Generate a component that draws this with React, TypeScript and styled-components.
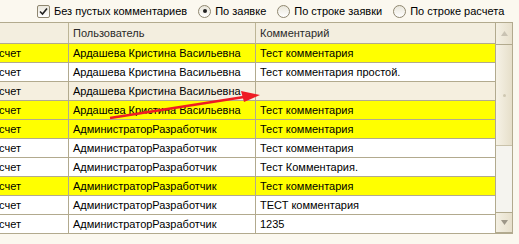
import styled, { createGlobalStyle } from 'styled-components';
import { Fragment } from 'react';

const GlobalStyle = createGlobalStyle`
  html, body {
    margin: 0;
    padding: 0;
    background: #fbf8ef;
  }
  body {
    font-family: "Liberation Sans", Arial, sans-serif;
    font-size: 11px;
    color: #000;
  }
`;

type RowKind = 'yellow' | 'white' | 'current';

const rowColors: Record<RowKind, string> = {
  yellow: '#ffff00',
  white: '#ffffff',
  current: '#f5efdf',
};

const rows: { kind: RowKind; type: string; user: string; comment: string }[] = [
  { kind: 'yellow', type: 'Расчет', user: 'Ардашева Кристина Васильевна', comment: 'Тест комментария' },
  { kind: 'white', type: 'Расчет', user: 'Ардашева Кристина Васильевна', comment: 'Тест комментария простой.' },
  { kind: 'current', type: 'Расчет', user: 'Ардашева Кристина Васильевна', comment: '' },
  { kind: 'yellow', type: 'Расчет', user: 'Ардашева Кристина Васильевна', comment: 'Тест комментария' },
  { kind: 'yellow', type: 'Расчет', user: 'АдминистраторРазработчик', comment: 'Тест комментария' },
  { kind: 'white', type: 'Расчет', user: 'АдминистраторРазработчик', comment: 'Тест комментария' },
  { kind: 'white', type: 'Расчет', user: 'АдминистраторРазработчик', comment: 'Тест Комментария.' },
  { kind: 'yellow', type: 'Расчет', user: 'АдминистраторРазработчик', comment: 'Тест комментария' },
  { kind: 'white', type: 'Расчет', user: 'АдминистраторРазработчик', comment: 'ТЕСТ комментария' },
  { kind: 'white', type: 'Расчет', user: 'АдминистраторРазработчик', comment: '1235' },
];

const Page = styled.div`
  position: relative;
  width: 519px;
  height: 244px;
  overflow: hidden;
  background: #fbf8ef;
`;

const Toolbar = styled.div`
  height: 22px;
  display: flex;
  align-items: center;
  padding-left: 37px;
  gap: 11px;
`;

const Option = styled.label`
  display: flex;
  align-items: center;
  gap: 4px;
  white-space: nowrap;
`;

const CheckBox = styled.span`
  width: 11px;
  height: 11px;
  border: 1px solid #8f8770;
  border-radius: 2px;
  background: linear-gradient(#ebe8dd, #fff);
  display: flex;
  align-items: center;
  justify-content: center;
`;

const Radio = styled.span<{ $on?: boolean }>`
  width: 11px;
  height: 11px;
  border: 1px solid #8f8770;
  border-radius: 50%;
  background: linear-gradient(#e9e6da, #fff);
  display: flex;
  align-items: center;
  justify-content: center;
  &::after {
    content: '';
    width: 4px;
    height: 4px;
    border-radius: 50%;
    background: ${(p) => (p.$on ? '#222' : 'transparent')};
  }
`;

const GridFrame = styled.div`
  display: flex;
  height: 212px;
  border-top: 1px solid #b2aa8e;
  border-bottom: 1px solid #b2aa8e;
  width: 513px;
  border-right: 1px solid #b2aa8e;
  box-sizing: border-box;
`;

const Table = styled.div`
  flex: 1;
  display: grid;
  grid-template-columns: 69px 187px 240px;
  grid-auto-rows: 19px;
  grid-template-rows: 21px;
  align-content: start;
  overflow: hidden;
`;

const HeadCell = styled.div`
  background: #f3eedf;
  border-right: 1px solid #bdb596;
  border-bottom: 1px solid #b2aa8e;
  display: flex;
  align-items: center;
  padding-left: 4px;
  color: #2a2a2a;
`;

const Cell = styled.div<{ $kind: RowKind; $first?: boolean }>`
  background: ${(p) => rowColors[p.$kind]};
  border-right: 1px solid #b2aa8e;
  border-bottom: 1px solid #b2aa8e;
  display: flex;
  align-items: center;
  padding-left: ${(p) => (p.$first ? 0 : 4)}px;
  overflow: hidden;
  white-space: nowrap;
`;

/* the first column is scrolled sideways, so its text starts out of view */
const Clipped = styled.span`
  margin-left: -14px;
`;

const ScrollBar = styled.div`
  width: 16px;
  display: flex;
  flex-direction: column;
  background: #f5f4ef;
  border-left: 1px solid #b2aa8e;
`;

const ScrollButton = styled.div<{ $h: number }>`
  height: ${(p) => p.$h}px;
  display: flex;
  align-items: center;
  justify-content: center;
  background: linear-gradient(90deg, #f4f0e3, #e7e0cc);
  border-bottom: 1px solid #b2aa8e;
`;

const Thumb = styled.div`
  height: 100px;
  background: linear-gradient(90deg, #f6f2e6, #e6dfca);
  border-bottom: 1px solid #c9c2aa;
  display: flex;
  align-items: center;
  justify-content: center;
  &::after {
    content: '';
    width: 3px;
    height: 3px;
    border-radius: 50%;
    background: #cfc8b2;
  }
`;

const Track = styled.div`
  flex: 1;
  border-bottom: 1px solid #b2aa8e;
`;

const Arrow = styled.svg`
  position: absolute;
  left: 0;
  top: 0;
  pointer-events: none;
`;

export default function App() {
  return (
    <Page>
      <GlobalStyle />
      <Toolbar>
        <Option>
          <CheckBox>
            <svg width="9" height="9" viewBox="0 0 9 9">
              <path d="M1 4.5 L3.5 7 L8 1.5" stroke="#222" strokeWidth="1.6" fill="none" />
            </svg>
          </CheckBox>
          Без пустых комментариев
        </Option>
        <Option>
          <Radio $on />
          По заявке
        </Option>
        <Option>
          <Radio />
          По строке заявки
        </Option>
        <Option>
          <Radio />
          По строке расчета
        </Option>
      </Toolbar>
      <GridFrame>
        <Table>
          <HeadCell />
          <HeadCell>Пользователь</HeadCell>
          <HeadCell>Комментарий</HeadCell>
          {rows.map((r, i) => (
            <Fragment key={i}>
              <Cell $kind={r.kind} $first>
                <Clipped>{r.type}</Clipped>
              </Cell>
              <Cell $kind={r.kind}>{r.user}</Cell>
              <Cell $kind={r.kind}>{r.comment}</Cell>
            </Fragment>
          ))}
        </Table>
        <ScrollBar>
          <ScrollButton $h={21}>
            <svg width="7" height="5" viewBox="0 0 7 5">
              <path d="M3.5 0 L7 5 L0 5 Z" fill="#c9c3b3" />
            </svg>
          </ScrollButton>
          <Thumb />
          <Track />
          <ScrollButton $h={19}>
            <svg width="7" height="5" viewBox="0 0 7 5">
              <path d="M0 0 L7 0 L3.5 5 Z" fill="#9d9788" />
            </svg>
          </ScrollButton>
        </ScrollBar>
      </GridFrame>
      <Arrow width="519" height="244">
        <line x1="110" y1="118" x2="244" y2="97" stroke="#ee1c24" strokeWidth="2.6" />
        <path d="M260 95 L241 91 L244 102 Z" fill="#ee1c24" />
      </Arrow>
    </Page>
  );
}
